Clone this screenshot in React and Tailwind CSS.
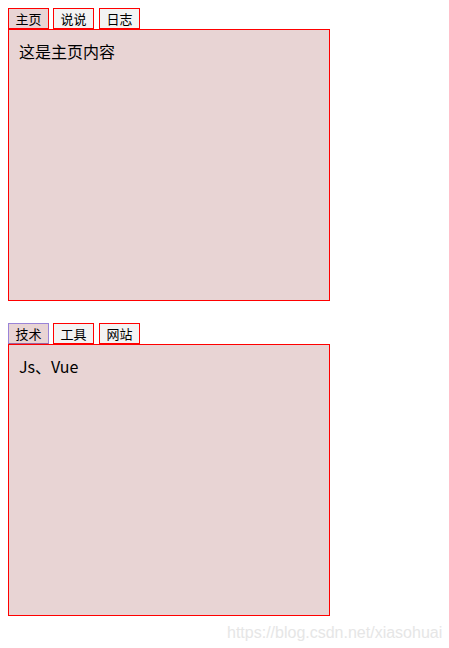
import React, { useState } from 'react';

const groups = [
    { tabs: ['主页', '说说', '日志'], contents: ['这是主页内容', '这是说说内容', '这是日志内容'], focus: false },
    { tabs: ['技术', '工具', '网站'], contents: ['Js、Vue', '工具内容', '网站内容'], focus: true },
];

const gapClass = ['', 'ml-[4px]', 'ml-[5px]'];

const TabBox = ({ group }) => {
    const [active, setActive] = useState(0);
    return (
        <div>
            <div className="flex h-[21px]">
                {group.tabs.map((t, i) => (
                    <button
                        key={t}
                        onClick={() => setActive(i)}
                        className={
                            gapClass[i] + ' w-[41px] h-[21px] text-[13px] leading-[19px] text-black border ' +
                            (i === active
                                ? group.focus
                                    ? 'bg-[#e8d4d4] border-[#9a84d8] border-b-[#a0609a]'
                                    : 'bg-[#e8d4d4] border-[#ff0000]'
                                : 'bg-[#f3f3f3] border-[#ff0000]')
                        }
                    >
                        {t}
                    </button>
                ))}
            </div>
            <div className="w-[322px] h-[272px] border border-[#ff0000] bg-[#e8d4d4] px-[10px] py-[9px] text-[16px] leading-[24px] text-black">
                {group.contents[active]}
            </div>
        </div>
    );
};

export default function App() {
    return (
        <div className="relative w-[449px] h-[648px] bg-white p-[8px] font-['Microsoft_YaHei','Noto_Sans_CJK_SC',sans-serif]">
            <TabBox group={groups[0]} />
            <div className="mt-[22px]">
                <TabBox group={groups[1]} />
            </div>
            <div className="absolute left-[227px] top-[621px] text-[16px] text-[#e6e6e6] font-['Liberation_Sans',sans-serif]">
                https://blog.csdn.net/xiasohuai
            </div>
        </div>
    );
}
